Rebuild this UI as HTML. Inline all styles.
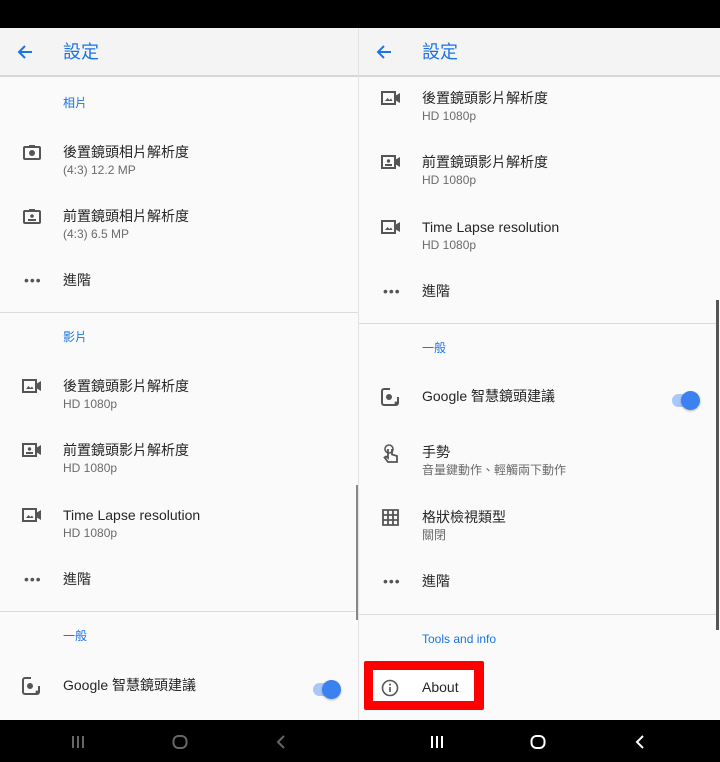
<!DOCTYPE html>
<html><head><meta charset="utf-8"><style>
*{margin:0;padding:0;box-sizing:border-box}
body{width:720px;height:762px;overflow:hidden;background:#fafafa;font-family:"Liberation Sans","Noto Sans CJK TC",sans-serif;position:relative}
.a{position:absolute;white-space:nowrap}
.t{font-size:14px;color:#262626;line-height:17px}
.s{font-size:12px;color:#6b6b6b;line-height:14px}
.h{font-size:12px;color:#1a73e8;line-height:14px}
.d{position:absolute;height:1px;background:#dcdcdc}
.ic{position:absolute}
</style></head><body>
<div class="a" style="left:0;top:0;width:720px;height:28px;background:#000"></div>
<div class="a" style="left:0;top:28px;width:358px;height:49px;background:#f4f4f4;border-bottom:2px solid #d6d6d6"></div>
<div class="a" style="left:359px;top:28px;width:361px;height:49px;background:#f4f4f4;border-bottom:2px solid #d6d6d6"></div>
<div class="a" style="left:358px;top:28px;width:1px;height:692px;background:#e2e2e2"></div>
<svg class="ic" style="left:16px;top:43px" width="18" height="18" viewBox="0 0 18 18"><path d="M16 9H3M9 3L3 9l6 6" fill="none" stroke="#1a73e8" stroke-width="2"/></svg>
<div class="a" style="left:63px;top:41px;font-size:18px;line-height:22px;color:#1a73e8">設定</div>
<svg class="ic" style="left:375px;top:43px" width="18" height="18" viewBox="0 0 18 18"><path d="M16 9H3M9 3L3 9l6 6" fill="none" stroke="#1a73e8" stroke-width="2"/></svg>
<div class="a" style="left:422px;top:41px;font-size:18px;line-height:22px;color:#1a73e8">設定</div>

<!-- LEFT -->
<div class="a h" style="left:63px;top:96px">相片</div>
<svg class="ic" style="left:23px;top:144px" width="18" height="16" viewBox="0 0 18 16"><rect x="1" y="3" width="16" height="12" rx="1" fill="none" stroke="#555" stroke-width="2"/><rect x="6" y="1" width="6" height="3" fill="#555"/><circle cx="9" cy="9" r="3" fill="#555"/></svg>
<div class="a t" style="left:63px;top:144px">後置鏡頭相片解析度</div>
<div class="a s" style="left:63px;top:163px">(4:3) 12.2 MP</div>
<svg class="ic" style="left:23px;top:208px" width="18" height="16" viewBox="0 0 18 16"><rect x="1" y="3" width="16" height="12" rx="1" fill="none" stroke="#555" stroke-width="2"/><rect x="6" y="1" width="6" height="3" fill="#555"/><circle cx="9" cy="8" r="1.8" fill="#555"/><rect x="5" y="11" width="8" height="2" fill="#555"/></svg>
<div class="a t" style="left:63px;top:208px">前置鏡頭相片解析度</div>
<div class="a s" style="left:63px;top:227px">(4:3) 6.5 MP</div>
<div class="a t" style="left:24px;top:272px;color:#555;letter-spacing:1px">•••</div>
<div class="a t" style="left:63px;top:272px">進階</div>
<div class="d" style="left:0;top:312px;width:358px"></div>
<div class="a h" style="left:63px;top:330px">影片</div>
<svg class="ic" style="left:22px;top:379px" width="20" height="14" viewBox="0 0 20 14"><rect x="1" y="1" width="13" height="12" fill="none" stroke="#555" stroke-width="2"/><path d="M14 5l5-3v10l-5-3z" fill="#555"/><path d="M4 10l2.5-3 2 2 1.5-1.5 1.5 2.5z" fill="#555"/></svg>
<div class="a t" style="left:63px;top:378px">後置鏡頭影片解析度</div>
<div class="a s" style="left:63px;top:397px">HD 1080p</div>
<svg class="ic" style="left:22px;top:443px" width="20" height="14" viewBox="0 0 20 14"><rect x="1" y="1" width="13" height="12" fill="none" stroke="#555" stroke-width="2"/><path d="M14 5l5-3v10l-5-3z" fill="#555"/><circle cx="7.5" cy="6" r="1.7" fill="#555"/><rect x="4" y="9" width="7" height="2" fill="#555"/></svg>
<div class="a t" style="left:63px;top:442px">前置鏡頭影片解析度</div>
<div class="a s" style="left:63px;top:461px">HD 1080p</div>
<svg class="ic" style="left:22px;top:508px" width="20" height="14" viewBox="0 0 20 14"><rect x="1" y="1" width="13" height="12" fill="none" stroke="#555" stroke-width="2"/><path d="M14 5l5-3v10l-5-3z" fill="#555"/><path d="M4 10l2.5-3 2 2 1.5-1.5 1.5 2.5z" fill="#555"/></svg>
<div class="a t" style="left:63px;top:507px">Time Lapse resolution</div>
<div class="a s" style="left:63px;top:526px">HD 1080p</div>
<div class="a t" style="left:24px;top:571px;color:#555;letter-spacing:1px">•••</div>
<div class="a t" style="left:63px;top:571px">進階</div>
<div class="d" style="left:0;top:611px;width:358px"></div>
<div class="a h" style="left:63px;top:629px">一般</div>
<svg class="ic" style="left:22px;top:677px" width="18" height="18" viewBox="0 0 18 18"><path d="M9 1H3a2 2 0 0 0-2 2v12a2 2 0 0 0 2 2h12a2 2 0 0 0 2-2V9" fill="none" stroke="#555" stroke-width="2"/><circle cx="8" cy="9" r="3" fill="#555"/><circle cx="15" cy="15" r="1.5" fill="#555"/></svg>
<div class="a t" style="left:63px;top:677px">Google 智慧鏡頭建議</div>
<div class="a" style="left:313px;top:683px;width:26px;height:13px;border-radius:7px;background:#a8c7fa"></div>
<div class="a" style="left:322px;top:680px;width:19px;height:19px;border-radius:50%;background:#3b82f0;box-shadow:0 1px 2px rgba(0,0,0,.3)"></div>
<div class="a" style="left:356px;top:485px;width:2px;height:135px;background:#888"></div>

<!-- RIGHT -->
<svg class="ic" style="left:381px;top:91px" width="20" height="14" viewBox="0 0 20 14"><rect x="1" y="1" width="13" height="12" fill="none" stroke="#555" stroke-width="2"/><path d="M14 5l5-3v10l-5-3z" fill="#555"/><path d="M4 10l2.5-3 2 2 1.5-1.5 1.5 2.5z" fill="#555"/></svg>
<div class="a t" style="left:422px;top:90px">後置鏡頭影片解析度</div>
<div class="a s" style="left:422px;top:109px">HD 1080p</div>
<svg class="ic" style="left:381px;top:155px" width="20" height="14" viewBox="0 0 20 14"><rect x="1" y="1" width="13" height="12" fill="none" stroke="#555" stroke-width="2"/><path d="M14 5l5-3v10l-5-3z" fill="#555"/><circle cx="7.5" cy="6" r="1.7" fill="#555"/><rect x="4" y="9" width="7" height="2" fill="#555"/></svg>
<div class="a t" style="left:422px;top:154px">前置鏡頭影片解析度</div>
<div class="a s" style="left:422px;top:173px">HD 1080p</div>
<svg class="ic" style="left:381px;top:220px" width="20" height="14" viewBox="0 0 20 14"><rect x="1" y="1" width="13" height="12" fill="none" stroke="#555" stroke-width="2"/><path d="M14 5l5-3v10l-5-3z" fill="#555"/><path d="M4 10l2.5-3 2 2 1.5-1.5 1.5 2.5z" fill="#555"/></svg>
<div class="a t" style="left:422px;top:219px">Time Lapse resolution</div>
<div class="a s" style="left:422px;top:238px">HD 1080p</div>
<div class="a t" style="left:383px;top:283px;color:#555;letter-spacing:1px">•••</div>
<div class="a t" style="left:422px;top:283px">進階</div>
<div class="d" style="left:359px;top:323px;width:357px"></div>
<div class="a h" style="left:422px;top:341px">一般</div>
<svg class="ic" style="left:381px;top:388px" width="18" height="18" viewBox="0 0 18 18"><path d="M9 1H3a2 2 0 0 0-2 2v12a2 2 0 0 0 2 2h12a2 2 0 0 0 2-2V9" fill="none" stroke="#555" stroke-width="2"/><circle cx="8" cy="9" r="3" fill="#555"/><circle cx="15" cy="15" r="1.5" fill="#555"/></svg>
<div class="a t" style="left:422px;top:388px">Google 智慧鏡頭建議</div>
<div class="a" style="left:672px;top:394px;width:26px;height:13px;border-radius:7px;background:#a8c7fa"></div>
<div class="a" style="left:681px;top:391px;width:19px;height:19px;border-radius:50%;background:#3b82f0;box-shadow:0 1px 2px rgba(0,0,0,.3)"></div>
<svg class="ic" style="left:382px;top:444px" width="18" height="20" viewBox="0 0 18 20"><circle cx="7" cy="5" r="4" fill="none" stroke="#555" stroke-width="1.6"/><path d="M6 5v9l-2-1.5-1.5 1L6 18h9v-6l-5-1.5V5" fill="none" stroke="#555" stroke-width="1.8"/></svg>
<div class="a t" style="left:422px;top:444px">手勢</div>
<div class="a s" style="left:422px;top:463px">音量鍵動作、輕觸兩下動作</div>
<svg class="ic" style="left:382px;top:509px" width="17" height="17" viewBox="0 0 17 17"><path d="M1 1h15v15H1zM6 1v15M11 1v15M1 6h15M1 11h15" fill="none" stroke="#555" stroke-width="1.8"/></svg>
<div class="a t" style="left:422px;top:509px">格狀檢視類型</div>
<div class="a s" style="left:422px;top:528px">關閉</div>
<div class="a t" style="left:383px;top:573px;color:#555;letter-spacing:1px">•••</div>
<div class="a t" style="left:422px;top:573px">進階</div>
<div class="d" style="left:359px;top:614px;width:357px"></div>
<div class="a h" style="left:422px;top:632px">Tools and info</div>
<div class="a" style="left:364px;top:661px;width:120px;height:49px;border:9px solid #f00;border-right-width:10px;background:#fff;border-radius:2px"></div>
<svg class="ic" style="left:381px;top:679px" width="18" height="18" viewBox="0 0 18 18"><circle cx="9" cy="9" r="7.5" fill="none" stroke="#555" stroke-width="1.6"/><rect x="8.2" y="8" width="1.6" height="5" fill="#555"/><circle cx="9" cy="5.6" r="1" fill="#555"/></svg>
<div class="a t" style="left:422px;top:679px">About</div>
<div class="a" style="left:716px;top:300px;width:3px;height:330px;background:#555"></div>

<div class="a" style="left:0;top:720px;width:720px;height:42px;background:#000"></div>
<svg class="ic" style="left:70px;top:735px" width="16" height="14" viewBox="0 0 16 14"><path d="M3 1v12M8 1v12M13 1v12" stroke="#666" stroke-width="2"/></svg>
<svg class="ic" style="left:172px;top:735px" width="16" height="14" viewBox="0 0 16 14"><rect x="1.5" y="1" width="13" height="12" rx="5" fill="none" stroke="#666" stroke-width="2"/></svg>
<svg class="ic" style="left:275px;top:735px" width="12" height="14" viewBox="0 0 12 14"><path d="M9 1L3 7l6 6" fill="none" stroke="#666" stroke-width="2"/></svg>
<svg class="ic" style="left:429px;top:735px" width="16" height="14" viewBox="0 0 16 14"><path d="M3 1v12M8 1v12M13 1v12" stroke="#fff" stroke-width="2"/></svg>
<svg class="ic" style="left:530px;top:735px" width="16" height="14" viewBox="0 0 16 14"><rect x="1.5" y="1" width="13" height="12" rx="5" fill="none" stroke="#fff" stroke-width="2"/></svg>
<svg class="ic" style="left:634px;top:735px" width="12" height="14" viewBox="0 0 12 14"><path d="M9 1L3 7l6 6" fill="none" stroke="#fff" stroke-width="2"/></svg>
</body></html>
